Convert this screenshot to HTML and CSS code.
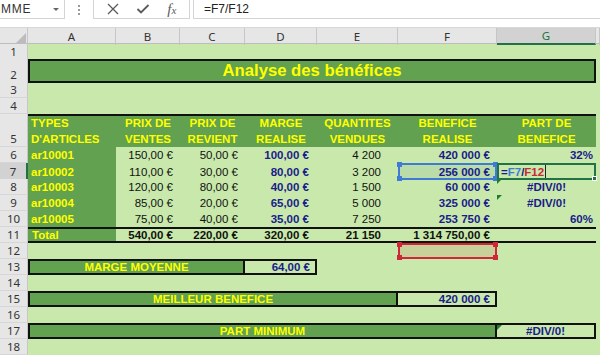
FILE: index.html
```html
<!DOCTYPE html>
<html lang="fr">
<head>
    <meta charset="UTF-8">
    <title>Analyse des bénéfices</title>
    <link rel="stylesheet" href="styles.css">
</head>
<body>

    <!-- barre de formule -->
    <div class="formula-bar">
        <div class="name-box">
            <span class="name">MME</span>
            <span class="caret"></span>
        </div>
        <div class="grip"><i></i><i></i><i></i></div>
        <div class="tools">
            <svg width="12" height="12" viewBox="0 0 12 12"><path d="M1 1 L11 11 M11 1 L1 11" stroke="#5a5a5a" stroke-width="1.3" fill="none"/></svg>
            <svg width="14" height="12" viewBox="0 0 14 12"><path d="M1.5 6 L5 9.5 L12.5 2" stroke="#5a5a5a" stroke-width="1.8" fill="none"/></svg>
            <span class="fx">f<span>x</span></span>
        </div>
        <div class="formula">=F7/F12</div>
    </div>

    <div class="sheet">
        <div class="row heads">
            <div class="corner"><svg width="28" height="17" viewBox="0 0 28 17"><path d="M26 5 L26 15 L16 15 Z" fill="#bcbcbc"/></svg></div>
            <div class="ch">A</div>
            <div class="ch">B</div>
            <div class="ch">C</div>
            <div class="ch">D</div>
            <div class="ch">E</div>
            <div class="ch">F</div>
            <div class="ch on">G</div>
            <div class="ch"></div>
        </div>

        <div class="row r15"><div class="rh">1</div></div>

        <div class="row r23">
            <div class="rh">2</div>
            <div class="c title span7">Analyse des bénéfices</div>
        </div>

        <div class="row"><div class="rh">3</div></div>
        <div class="row"><div class="rh">4</div></div>

        <div class="row r33">
            <div class="rh">5</div>
            <div class="th left"><span>TYPES<br>D'ARTICLES</span></div>
            <div class="th"><span>PRIX DE<br>VENTES</span></div>
            <div class="th"><span>PRIX DE<br>REVIENT</span></div>
            <div class="th"><span>MARGE<br>REALISE</span></div>
            <div class="th"><span>QUANTITES<br>VENDUES</span></div>
            <div class="th"><span>BENEFICE<br>REALISE</span></div>
            <div class="th"><span>PART DE<br>BENEFICE</span></div>
        </div>

        <div class="row">
            <div class="rh">6</div>
            <div class="c item">ar10001</div>
            <div class="c num">150,00 €</div>
            <div class="c num">50,00 €</div>
            <div class="c num val marge">100,00 €</div>
            <div class="c num qty">4 200</div>
            <div class="c num val">420 000 €</div>
            <div class="c num val pct">32%</div>
        </div>

        <div class="row">
            <div class="rh on">7</div>
            <div class="c item">ar10002</div>
            <div class="c num">110,00 €</div>
            <div class="c num">30,00 €</div>
            <div class="c num val marge">80,00 €</div>
            <div class="c num qty">3 200</div>
            <div class="c num val ref blue">256 000 €<i class="h tl"></i><i class="h tr"></i><i class="h bl"></i><i class="h br"></i></div>
            <div class="c edit"><b class="op">=</b><b class="f7">F7</b><b class="op">/</b><b class="f12">F12</b><i class="cursor"></i><i class="fill"></i></div>
        </div>

        <div class="row">
            <div class="rh">8</div>
            <div class="c item">ar10003</div>
            <div class="c num">120,00 €</div>
            <div class="c num">80,00 €</div>
            <div class="c num val marge">40,00 €</div>
            <div class="c num qty">1 500</div>
            <div class="c num val">60 000 €</div>
            <div class="c mid val err">#DIV/0!</div>
        </div>

        <div class="row">
            <div class="rh">9</div>
            <div class="c item">ar10004</div>
            <div class="c num">85,00 €</div>
            <div class="c num">20,00 €</div>
            <div class="c num val marge">65,00 €</div>
            <div class="c num qty">5 000</div>
            <div class="c num val">325 000 €</div>
            <div class="c mid val err">#DIV/0!</div>
        </div>

        <div class="row">
            <div class="rh">10</div>
            <div class="c item">ar10005</div>
            <div class="c num">75,00 €</div>
            <div class="c num">40,00 €</div>
            <div class="c num val marge">35,00 €</div>
            <div class="c num qty">7 250</div>
            <div class="c num val">253 750 €</div>
            <div class="c num val pct">60%</div>
        </div>

        <div class="row total">
            <div class="rh">11</div>
            <div class="c item">Total</div>
            <div class="c num">540,00 €</div>
            <div class="c num">220,00 €</div>
            <div class="c num marge">320,00 €</div>
            <div class="c num qty">21 150</div>
            <div class="c num">1 314 750,00 €</div>
            <div class="c"></div>
        </div>

        <div class="row">
            <div class="rh">12</div>
            <div class="span5"></div>
            <div class="c ref red"><i class="h tl"></i><i class="h tr"></i><i class="h bl"></i><i class="h br"></i></div>
        </div>

        <div class="row r17">
            <div class="rh">13</div>
            <div class="c box label span3">MARGE MOYENNE</div>
            <div class="c box num val">64,00 €</div>
        </div>

        <div class="row"><div class="rh">14</div></div>

        <div class="row">
            <div class="rh">15</div>
            <div class="c box label span5">MEILLEUR BENEFICE</div>
            <div class="c box num val">420 000 €</div>
        </div>

        <div class="row"><div class="rh">16</div></div>

        <div class="row">
            <div class="rh">17</div>
            <div class="c box label span6">PART MINIMUM</div>
            <div class="c box mid val err">#DIV/0!</div>
        </div>

        <div class="row"><div class="rh">18</div></div>
    </div>

</body>
</html>
```

FILE: styles.css
```css
* {
    box-sizing: border-box;
}

body {
    margin: 0;
    width: 600px;
    height: 355px;
    overflow: hidden;
    background: #fff;
    font-family: "Liberation Sans", Arial, sans-serif;
}

/* barre de formule */
.formula-bar {
    display: flex;
    align-items: flex-start;
    height: 27px;
    background: #fff;
}

.name-box {
    width: 65px;
    height: 19px;
    display: flex;
    align-items: center;
    justify-content: space-between;
    padding: 0 5px 0 1px;
    border-right: 1px solid #d4d4d4;
    border-bottom: 1px solid #d4d4d4;
    font-size: 12px;
    letter-spacing: 0.8px;
    color: #333;
}

.caret {
    width: 0;
    height: 0;
    border-left: 3px solid transparent;
    border-right: 3px solid transparent;
    border-top: 3px solid #666;
}

.grip {
    width: 28px;
    height: 19px;
    display: flex;
    flex-direction: column;
    align-items: center;
    justify-content: center;
    gap: 2px;
}

.grip i {
    width: 2px;
    height: 2px;
    background: #9a9a9a;
}

.tools {
    width: 97px;
    height: 19px;
    display: flex;
    align-items: center;
    justify-content: space-around;
    padding: 0 4px;
    border-left: 1px solid #d4d4d4;
    border-right: 1px solid #d4d4d4;
    border-bottom: 1px solid #d4d4d4;
}

.fx {
    font-family: "Liberation Serif", serif;
    font-style: italic;
    font-size: 15px;
    color: #5a5a5a;
}

.fx span {
    font-size: 11px;
}

.formula {
    flex: 1;
    height: 19px;
    margin-left: 3px;
    padding-left: 10px;
    line-height: 18px;
    border-left: 1px solid #d4d4d4;
    border-bottom: 1px solid #d4d4d4;
    font-size: 12px;
    color: #222;
}

/* feuille */
.row {
    display: grid;
    grid-template-columns: 28px 88px 64px 65px 72px 81px 99px 99px 4px;
    height: 16px;
    background: #c8e9ab;
}

.r15 { height: 15px; }
.r17 { height: 16px; }
.r23 { height: 23px; }
.r33 { height: 33px; }

.heads {
    height: 17px;
    background: #e6e6e6;
    border-top: 1px solid #d8d8d8;
    border-bottom: 1px solid #bdbdbd;
}

.corner {
    border-right: 1px solid #c6c6c6;
}

.corner svg {
    display: block;
}

.ch {
    display: flex;
    align-items: center;
    justify-content: center;
    border-right: 1px solid #c6c6c6;
    font-family: "Noto Sans", sans-serif;
    font-size: 11.5px;
    color: #333;
}

.ch.on {
    background: #d2d2d2;
    color: #217346;
    border-bottom: 2px solid #217346;
}

.rh {
    display: flex;
    align-items: flex-end;
    justify-content: center;
    line-height: 15px;
    background: #e6e6e6;
    border-right: 1px solid #c6c6c6;
    border-bottom: 1px solid #d6d6d6;
    font-family: "Noto Sans", sans-serif;
    font-size: 11.5px;
    color: #333;
}

.rh.on {
    background: #d2d2d2;
    border-right: 2px solid #217346;
}

.c {
    position: relative;
    display: flex;
    align-items: center;
    white-space: nowrap;
    font-size: 11.5px;
    color: #111;
}

.span3 { grid-column: span 3; }
.span5 { grid-column: span 5; }
.span6 { grid-column: span 6; }
.span7 { grid-column: span 7; }

.title {
    justify-content: center;
    background: #62a14f;
    border: 2px solid #111;
    color: #ffff00;
    font-weight: bold;
    font-size: 16.7px;
}

.th {
    display: flex;
    align-items: flex-end;
    justify-content: center;
    text-align: center;
    line-height: 15.5px;
    background: #62a14f;
    border-top: 2px solid #111;
    color: #ffff00;
    font-weight: bold;
    font-size: 11.5px;
    white-space: nowrap;
}

.th.left {
    justify-content: flex-start;
    text-align: left;
    padding-left: 3px;
}

.item {
    background: #62a14f;
    color: #ffff00;
    font-weight: bold;
    padding-left: 3px;
}

.num {
    justify-content: flex-end;
    padding-right: 7px;
}

.marge { padding-right: 8px; }
.qty { padding-right: 17px; }
.pct { padding-right: 3px; }

.mid {
    justify-content: center;
}

.val {
    color: #1b1b8a;
    font-weight: bold;
}

.total .c {
    border-top: 2px solid #111;
    border-bottom: 2px solid #111;
    font-weight: bold;
}

.total .item {
    padding-left: 4px;
}

/* blocs du bas */
.box {
    border-top: 2px solid #111;
    border-bottom: 2px solid #111;
    border-right: 2px solid #111;
}

.box.num {
    padding-right: 5px;
}

.label {
    justify-content: center;
    background: #62a14f;
    border-left: 2px solid #111;
    color: #ffff00;
    font-weight: bold;
}

/* références de la formule */
.ref {
    border: 2px solid;
}

.ref.blue {
    border-color: #3f7ad6;
    background: #b9dca8;
    padding-right: 5px;
}

.ref.red {
    border-color: #d0263a;
    background: #c9d19b;
}

.h {
    position: absolute;
    width: 5px;
    height: 5px;
}

.blue .h { background: #3f7ad6; }
.red .h { background: #d0263a; }

.h.tl { left: -3px; top: -3px; }
.h.tr { right: -3px; top: -3px; }
.h.bl { left: -3px; bottom: -3px; }
.h.br { right: -3px; bottom: -3px; }

.edit {
    border: 2px solid #217346;
    padding-left: 2px;
    font-weight: bold;
}

.edit b {
    font-weight: bold;
}

.edit .op { color: #1b1b8a; }
.edit .f7 { color: #3f7ad6; }
.edit .f12 { color: #c8283a; }

.cursor {
    width: 1px;
    height: 13px;
    margin-left: 1px;
    background: #222;
}

.fill {
    position: absolute;
    right: -3px;
    bottom: -3px;
    width: 5px;
    height: 5px;
    background: #217346;
    border: 1px solid #fff;
}

.err::before {
    content: "";
    position: absolute;
    left: 0;
    top: 0;
    border-top: 5px solid #1e7d32;
    border-right: 5px solid transparent;
}

.box.err::before {
    left: 0;
    top: 0;
}
```
